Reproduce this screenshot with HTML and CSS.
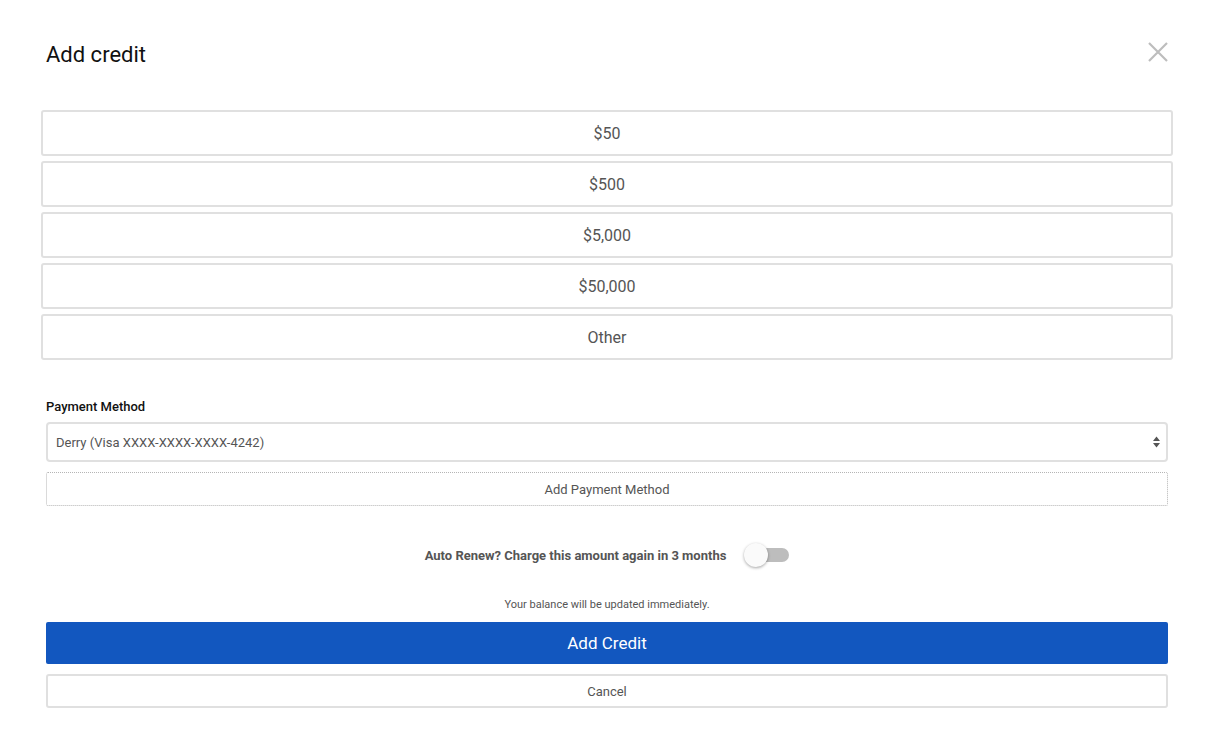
FILE: index.html
```html
<!DOCTYPE html>
<html>
<head>
<meta charset="utf-8">
<link rel="stylesheet" href="styles.css">
</head>
<body>
<div class="modal">
  <div class="header">
    <h1 class="title">Add credit</h1>
    <button class="close" aria-label="Close">
      <svg width="20" height="20" viewBox="0 0 20 20"><path d="M1 1L19 19M19 1L1 19" stroke="#bdbdbd" stroke-width="2.2" fill="none"/></svg>
    </button>
  </div>
  <div class="amounts">
    <button class="amount">$50</button>
    <button class="amount">$500</button>
    <button class="amount">$5,000</button>
    <button class="amount">$50,000</button>
    <button class="amount">Other</button>
  </div>
  <label class="label">Payment Method</label>
  <div class="select">
    <span>Derry (Visa XXXX-XXXX-XXXX-4242)</span>
    <svg class="arrows" width="7" height="12" viewBox="0 0 7 12"><path d="M3.5 0.5L7 5H0Z M0 7H7L3.5 11.5Z" fill="#555"/></svg>
  </div>
  <button class="add-method">Add Payment Method</button>
  <div class="renew">
    <span class="renew-text">Auto Renew? Charge this amount again in 3 months</span>
    <span class="toggle"><span class="knob"></span></span>
  </div>
  <p class="note">Your balance will be updated immediately.</p>
  <button class="primary">Add Credit</button>
  <button class="cancel">Cancel</button>
</div>
</body>
</html>
```
FILE: styles.css
```css
* { box-sizing: border-box; }
body {
  margin: 0;
  background: #fff;
  font-family: Roboto, "Liberation Sans", sans-serif;
  color: #555;
}
.modal {
  padding: 38px 44px 0 46px;
  display: flex;
  flex-direction: column;
}
.header {
  display: flex;
  justify-content: space-between;
  align-items: flex-start;
  height: 72px;
}
.title {
  margin: 1px 0 0;
  font-size: 22px;
  font-weight: 400;
  color: #111;
  line-height: 32px;
}
.close {
  border: 0;
  background: none;
  padding: 0;
  margin-top: 4px;
  width: 20px;
  height: 20px;
}
.amounts {
  margin: 0 -5px;
  display: flex;
  flex-direction: column;
  gap: 5px;
}
.amount {
  height: 46px;
  background: #fff;
  border: 2px solid #e0e0e0;
  border-radius: 3px;
  font-family: inherit;
  font-size: 16px;
  color: #555;
}
.label {
  margin-top: 39px;
  font-size: 13px;
  font-weight: 500;
  color: #111;
  line-height: 16px;
}
.select {
  margin-top: 7px;
  height: 40px;
  border: 2px solid #e0e0e0;
  border-radius: 4px;
  display: flex;
  align-items: center;
  justify-content: space-between;
  padding: 0 6px 0 8px;
  font-size: 13px;
  color: #555;
}
.add-method {
  margin-top: 10px;
  height: 34px;
  background: #fff;
  border: 1px dotted #b5b5b5;
  border-radius: 2px;
  font-family: inherit;
  font-size: 13px;
  color: #555;
}
.renew {
  margin-top: 37px;
  display: flex;
  justify-content: center;
  align-items: center;
  gap: 19px;
  height: 24px;
}
.renew-text {
  font-size: 13px;
  font-weight: 700;
  color: #555;
}
.toggle {
  position: relative;
  width: 44px;
  height: 14px;
  border-radius: 7px;
  background: #bdbdbd;
}
.knob {
  position: absolute;
  left: -1px;
  top: -5px;
  width: 24px;
  height: 24px;
  border-radius: 50%;
  background: #fafafa;
  box-shadow: 0 1px 3px rgba(0,0,0,0.35);
}
.note {
  margin: 31px 0 0;
  text-align: center;
  font-size: 11px;
  line-height: 14px;
  color: #555;
}
.primary {
  margin-top: 10px;
  height: 42px;
  border: 0;
  border-radius: 2px;
  background: #1257bf;
  color: #fff;
  font-family: inherit;
  font-size: 17px;
}
.cancel {
  margin-top: 10px;
  height: 34px;
  background: #fff;
  border: 2px solid #e0e0e0;
  border-radius: 3px;
  font-family: inherit;
  font-size: 13px;
  color: #555;
}
```
